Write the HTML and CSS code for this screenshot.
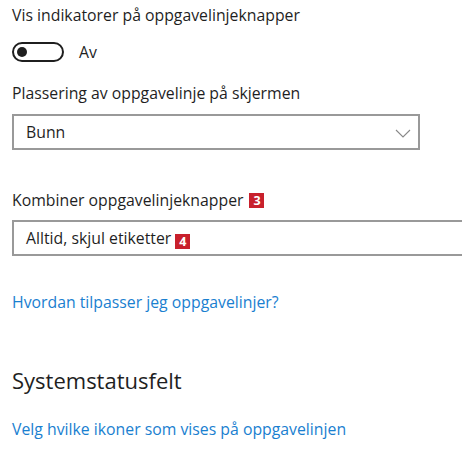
FILE: index.html
```html
<!DOCTYPE html>
<html>
<head>
    <meta charset="utf-8">
    <title>Oppgavelinje</title>
    <link rel="stylesheet" href="styles.css">
</head>
<body>
    <div class="page">
        <div class="label">Vis indikatorer på oppgavelinjeknapper</div>
        <div class="toggle-row">
            <span class="toggle"><span class="knob"></span></span>
            <span class="toggle-text">Av</span>
        </div>

        <div class="label label-place">Plassering av oppgavelinje på skjermen</div>
        <div class="select select-short">
            <span>Bunn</span>
            <svg class="chevron" width="16" height="9" viewBox="0 0 16 9">
                <polyline points="1,1 8,8 15,1" fill="none" stroke="#888" stroke-width="1.1"/>
            </svg>
        </div>

        <div class="label label-combine">Kombiner oppgavelinjeknapper <span class="badge">3</span></div>
        <div class="select select-wide">
            <span>Alltid, skjul etiketter <span class="badge">4</span></span>
        </div>

        <a class="link link-help" href="#">Hvordan tilpasser jeg oppgavelinjer?</a>

        <h2 class="heading">Systemstatusfelt</h2>
        <a class="link link-icons" href="#">Velg hvilke ikoner som vises på oppgavelinjen</a>
    </div>
</body>
</html>
```

FILE: styles.css
```css
body {
    margin: 0;
    background: #fff;
    color: #1f1f1f;
    font-family: "Open Sans", "Noto Sans", sans-serif;
    font-size: 15.8px;
    line-height: 20px;
    overflow: hidden;
}
.page {
    padding: 5px 0 0 12px;
}
.label {
    display: flex;
    align-items: center;
    gap: 6px;
}
.toggle-row {
    display: flex;
    align-items: center;
    gap: 15px;
    margin-top: 17px;
    height: 20px;
}
.toggle {
    box-sizing: border-box;
    width: 52px;
    height: 20px;
    border: 2px solid #1f1f1f;
    border-radius: 10px;
    display: flex;
    align-items: center;
    padding-left: 3px;
}
.knob {
    width: 10px;
    height: 10px;
    border-radius: 50%;
    background: #1f1f1f;
}
.label-place {
    margin-top: 21px;
}
.select {
    box-sizing: border-box;
    height: 36px;
    border: 2px solid #999;
    display: flex;
    align-items: center;
    justify-content: space-between;
    padding: 0 7px 0 12px;
}
.select-short {
    width: 408px;
    margin-top: 11px;
}
.select-wide {
    width: 460px;
    margin-top: 10px;
}
.chevron {
    display: block;
    margin-top: 2px;
}
.label-combine {
    margin-top: 40px;
}
.badge {
    display: inline-block;
    width: 15px;
    height: 15px;
    background: #c8202c;
    color: #fff;
    font-weight: bold;
    font-size: 12.5px;
    line-height: 15px;
    text-align: center;
    vertical-align: -2px;
}
.link {
    display: block;
    color: #1a80d0;
    text-decoration: none;
}
.link-help {
    margin-top: 36px;
}
.heading {
    margin: 54px 0 0;
    font-size: 22px;
    line-height: 28px;
    font-weight: normal;
}
.link-icons {
    margin-top: 25px;
}
```
